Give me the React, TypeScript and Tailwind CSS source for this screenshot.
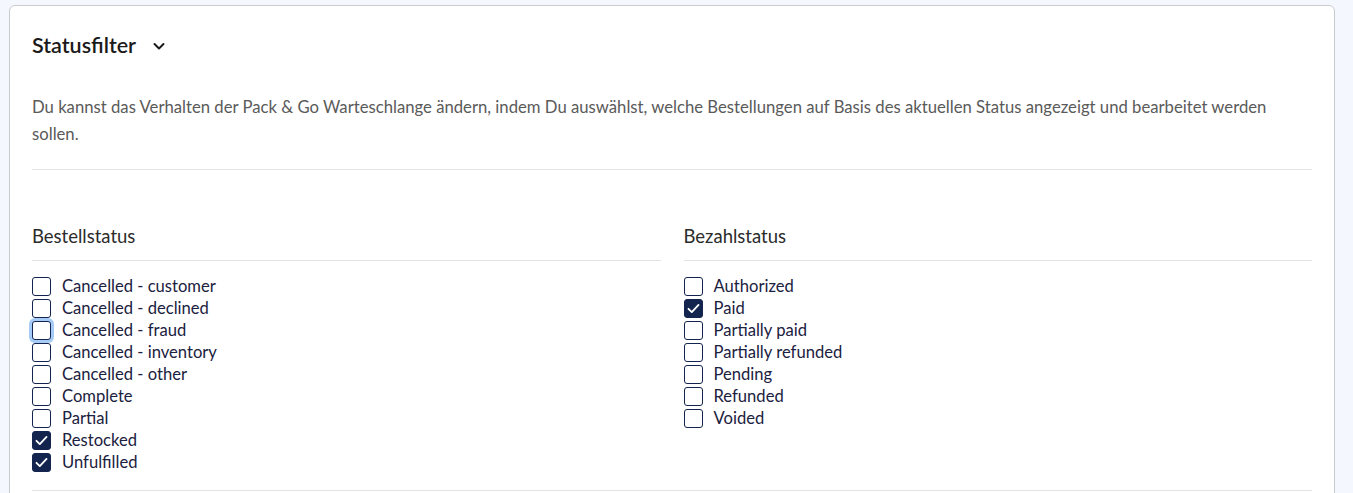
import React from "react";

const orderStatus = [
  { label: "Cancelled - customer", checked: false },
  { label: "Cancelled - declined", checked: false },
  { label: "Cancelled - fraud", checked: false, focus: true },
  { label: "Cancelled - inventory", checked: false },
  { label: "Cancelled - other", checked: false },
  { label: "Complete", checked: false },
  { label: "Partial", checked: false },
  { label: "Restocked", checked: true },
  { label: "Unfulfilled", checked: true },
];

const paymentStatus = [
  { label: "Authorized", checked: false },
  { label: "Paid", checked: true },
  { label: "Partially paid", checked: false },
  { label: "Partially refunded", checked: false },
  { label: "Pending", checked: false },
  { label: "Refunded", checked: false },
  { label: "Voided", checked: false },
];

type Item = { label: string; checked: boolean; focus?: boolean };

const Checkbox = ({ item }: { item: Item }) => (
  <label className="flex items-center h-[22px] cursor-pointer">
    <span
      className={`flex items-center justify-center w-[19px] h-[19px] rounded-[3px] border border-[#13254f] ${
        item.checked ? "bg-[#13254f]" : "bg-white"
      } ${item.focus ? "ring-[3px] ring-[#a5cbf6]" : ""}`}
    >
      {item.checked && (
        <svg width="15" height="15" viewBox="0 0 14 14" fill="none">
          <path d="M2.3 7.3l3.1 3 6.3-6.6" stroke="white" strokeWidth="1.7" strokeLinecap="round" strokeLinejoin="round" />
        </svg>
      )}
    </span>
    <span className="ml-[11px] text-[16.6px] text-[#1b2140]">{item.label}</span>
  </label>
);

const Column = ({ title, items }: { title: string; items: Item[] }) => (
  <div className="flex-1">
    <h3 className="text-[18.5px] leading-[26px] text-[#2b2b2b]">{title}</h3>
    <div className="border-t border-[#e3e3e3] mt-[11px] pt-[14px]">
      {items.map((i) => (
        <Checkbox key={i.label} item={i} />
      ))}
    </div>
  </div>
);

export default function App() {
  return (
    <div className="min-h-screen bg-[#f4f8fe] pt-[5px] pl-[9px] pr-[18px] font-['Lato',sans-serif] overflow-hidden h-[493px]">
      <div className="bg-white border border-[#c9cbcf] rounded-[6px] px-[22px] pt-[25px] pb-[40px]">
        <div className="flex items-center h-[28px]">
          <h2 className="text-[21.5px] font-semibold text-[#1a1a1a]">Statusfilter</h2>
          <svg className="ml-[16px] mt-[2px]" width="14" height="14" viewBox="0 0 14 14" fill="none">
            <path d="M2.5 5l4.5 4.5L11.5 5" stroke="#1a1a1a" strokeWidth="2" strokeLinecap="round" strokeLinejoin="round" />
          </svg>
        </div>
        <p className="mt-[35px] text-[16.7px] leading-[27px] text-[#5a5a5a]">
          Du kannst das Verhalten der Pack &amp; Go Warteschlange ändern, indem Du auswählst, welche Bestellungen auf Basis des aktuellen Status angezeigt und bearbeitet werden sollen.
        </p>
        <div className="border-t border-[#e3e3e3] mt-[21px]" />
        <div className="flex gap-[23px] mt-[53px]">
          <Column title="Bestellstatus" items={orderStatus} />
          <Column title="Bezahlstatus" items={paymentStatus} />
        </div>
        <div className="border-t border-[#e3e3e3] mt-[17px]" />
      </div>
    </div>
  );
}
